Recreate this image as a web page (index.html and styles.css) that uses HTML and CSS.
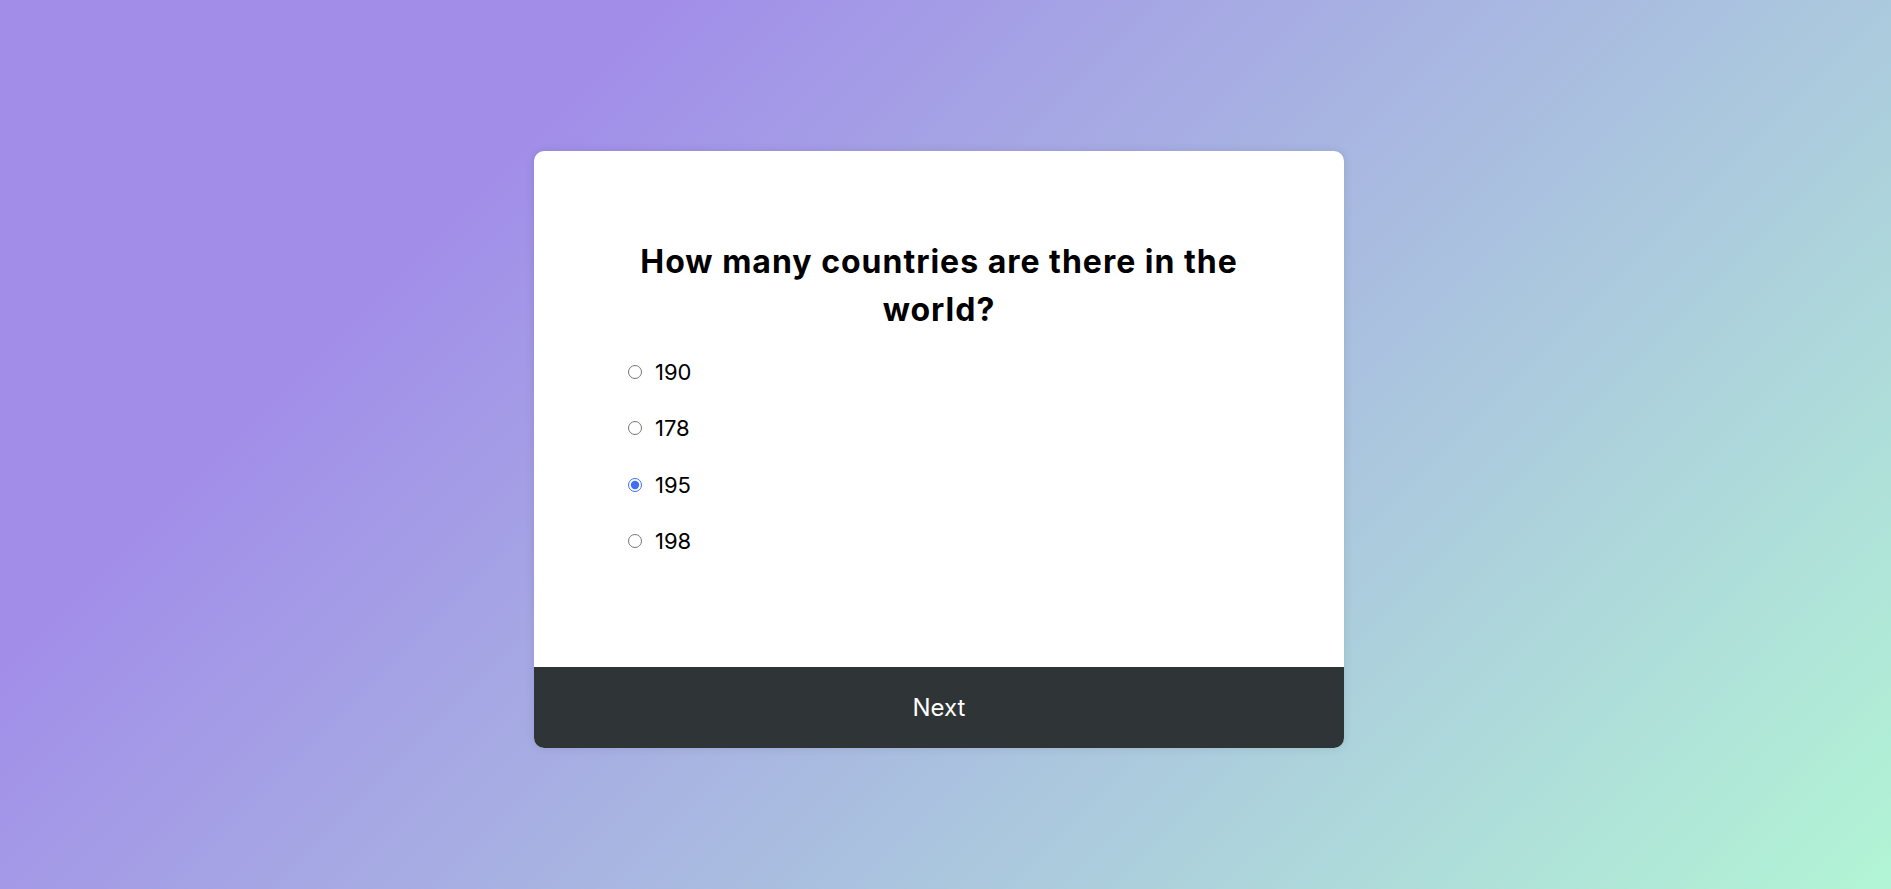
FILE: index.html
```html
<!DOCTYPE html>
<html lang="en">
<head>
<meta charset="utf-8">
<title>Quiz</title>
<link rel="stylesheet" href="styles.css">
</head>
<body>
<div class="page">
  <div class="quiz">
    <div class="quiz-body">
      <h2 class="question">How many countries are there in the world?</h2>
      <ul class="answers">
        <li><label class="answer"><input type="radio" name="answer" class="radio"><span class="answer-text">190</span></label></li>
        <li><label class="answer"><input type="radio" name="answer" class="radio"><span class="answer-text">178</span></label></li>
        <li><label class="answer"><input type="radio" name="answer" class="radio" checked><span class="answer-text">195</span></label></li>
        <li><label class="answer"><input type="radio" name="answer" class="radio"><span class="answer-text">198</span></label></li>
      </ul>
    </div>
    <button class="next">Next</button>
  </div>
</div>
</body>
</html>
```

FILE: styles.css
```css
* { box-sizing: border-box; }
html, body { margin: 0; padding: 0; }
body {
  font-family: Inter, "Noto Sans", "DejaVu Sans", sans-serif;
  color: #000;
}
.page {
  min-height: 100vh;
  display: flex;
  align-items: center;
  justify-content: center;
  padding: 10px 13px 0 0;
  background: linear-gradient(135deg, #a28ee9 0%, #a28ee9 24%, #b2f5d5 100%);
}
.quiz {
  width: 810px;
  background: #fff;
  border-radius: 10px;
  box-shadow: 0 0 10px rgba(0, 0, 0, 0.1);
  overflow: hidden;
}
.quiz-body {
  padding: 86.5px 94px 109.3px;
}
.question {
  margin: 0;
  font-size: 32px;
  line-height: 48px;
  font-weight: 700;
  letter-spacing: 1px;
  text-align: center;
}
.answers {
  list-style: none;
  margin: 21.7px 0 0;
  padding: 0;
  display: flex;
  flex-direction: column;
  gap: 23.5px;
}
.answer {
  display: flex;
  align-items: center;
  height: 33px;
  font-size: 22px;
  cursor: pointer;
}
.radio {
  width: 14px;
  height: 14px;
  margin: 0 13px 0 0;
  accent-color: #3f6ff2;
}
.next {
  display: block;
  width: 100%;
  height: 81px;
  border: none;
  background: #2f3436;
  color: #fff;
  font-family: Inter, "Noto Sans", sans-serif;
  font-size: 24px;
  cursor: pointer;
}
```
